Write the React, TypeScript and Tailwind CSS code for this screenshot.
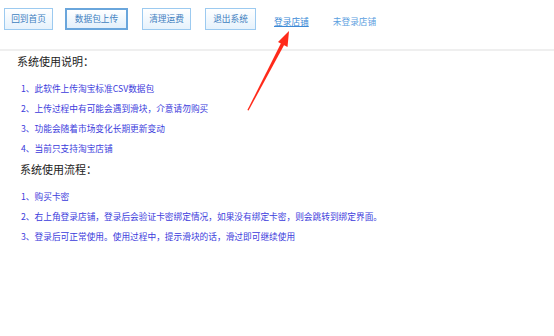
import React from 'react'

const font = { fontFamily: '"Noto Sans CJK SC", "Noto Sans", sans-serif' }

function NavButton({ label, className, active }: { label: string; className: string; active?: boolean }) {
  return (
    <button
      className={
        active
          ? `${className} flex items-center justify-center h-[22px] shrink-0 border-2 border-[#6aa6dc] bg-gradient-to-b from-white to-[#e3f0fb] text-[8.7px] text-[#3f7fbf] leading-none`
          : `${className} flex items-center justify-center h-[22px] shrink-0 border border-[#9ccaf0] bg-gradient-to-b from-white to-[#e6f2fc] text-[8.7px] text-[#3f7fbf] leading-none`
      }
    >
      {label}
    </button>
  )
}

const usage = [
  '1、此软件上传淘宝标准CSV数据包',
  '2、上传过程中有可能会遇到滑块，介意请勿购买',
  '3、功能会随着市场变化长期更新变动',
  '4、当前只支持淘宝店铺',
]

const flow = [
  '1、购买卡密',
  '2、右上角登录店铺，登录后会验证卡密绑定情况，如果没有绑定卡密，则会跳转到绑定界面。',
  '3、登录后可正常使用。使用过程中，提示滑块的话，滑过即可继续使用',
]

export default function App() {
  return (
    <div className="relative w-[554px] h-[336px] bg-white overflow-hidden" style={font}>
      {/* Top bar */}
      <div className="flex items-start h-[51px] pl-[4px] pt-[8px] border-b-2 border-[#efefef]">
        <NavButton label="回到首页" className="w-[49px]" />
        <NavButton label="数据包上传" className="w-[63px] ml-[12px]" active />
        <NavButton label="清理运费" className="w-[49px] ml-[14px]" />
        <NavButton label="退出系统" className="w-[51px] ml-[14px]" />
        <a className="ml-[18px] mt-[7px] text-[8.7px] leading-[14px] text-[#3d8ad6] underline">登录店铺</a>
        <a className="ml-[24px] mt-[7px] text-[8.7px] leading-[14px] text-[#5ba0e0]">未登录店铺</a>
      </div>

      {/* Content */}
      <div className="pl-[17px]">
        <h2 className="text-[11px] leading-[20px] text-[#222]">系统使用说明：</h2>
        <ul className="mt-[8px] pl-[4px]">
          {usage.map((t) => (
            <li key={t} className="text-[8.7px] leading-[20px] text-[#3b3bdc]">
              {t}
            </li>
          ))}
        </ul>
        <h2 className="pl-[3px] text-[11px] leading-[20px] text-[#222]">系统使用流程：</h2>
        <ul className="mt-[8px] pl-[4px]">
          {flow.map((t) => (
            <li key={t} className="text-[8.7px] leading-[20px] text-[#3b3bdc] whitespace-nowrap">
              {t}
            </li>
          ))}
        </ul>
      </div>

      {/* Red annotation arrow */}
      <svg className="absolute left-0 top-0" width="554" height="336" viewBox="0 0 554 336">
        <polygon points="247.4,110 248.6,110.4 284.4,44.5 281.2,42.8" fill="#ff2a1a" />
        <polygon points="289,31 278,42 287.5,47" fill="#ff2a1a" />
      </svg>
    </div>
  )
}
